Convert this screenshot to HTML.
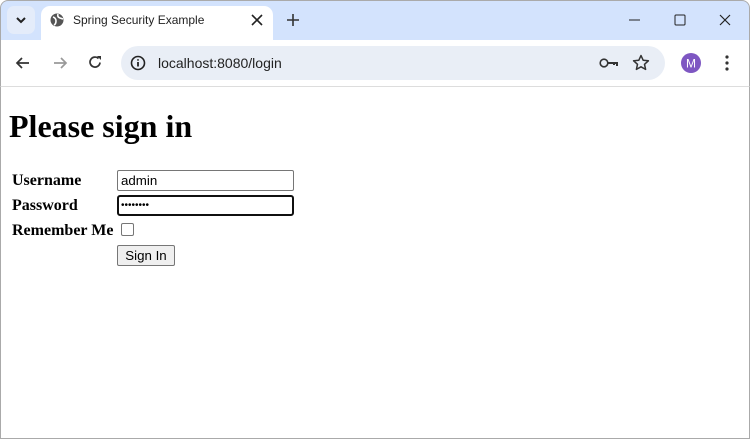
<!DOCTYPE html>
<html><head><meta charset="utf-8"><style>
*{margin:0;padding:0;box-sizing:border-box}
body{width:750px;height:439px;overflow:hidden;background:#fff;font-family:"Liberation Sans",sans-serif;position:relative}
.top{position:absolute;left:0;top:0;width:750px;height:40px;background:#d3e3fd;border:1px solid #aaa;border-bottom:none;border-radius:8px 8px 0 0}
.tab{position:absolute;left:41px;top:6px;width:232px;height:36px;background:#fff;border-radius:9px 9px 0 0}
.tabtxt{position:absolute;left:73px;top:13px;font-size:12px;color:#222}
.dd{position:absolute;left:7px;top:6px;width:28px;height:28px;background:#e4ecfa;border-radius:7px}
.bar{position:absolute;left:0;top:40px;width:750px;height:47px;background:#fff;border-left:1px solid #aaa;border-right:1px solid #aaa;border-bottom:1px solid #ddd}
.omni{position:absolute;left:121px;top:46px;width:544px;height:34px;background:#e9eef6;border-radius:17px}
.url{position:absolute;left:158px;top:55px;font-size:14px;color:#222}
.page{position:absolute;left:0;top:87px;width:750px;height:352px;border:1px solid #aaa;border-top:none}
h1{position:absolute;left:9px;top:108px;font-family:"Liberation Serif",serif;font-size:32px;font-weight:bold}
.lbl{position:absolute;left:12px;font-family:"Liberation Serif",serif;font-weight:bold;font-size:16px}
.in{position:absolute;left:117px;width:177px;height:21px;border:1px solid #767676;border-radius:2px;font-size:13.3px;padding:2px 3px;line-height:15px}
svg{position:absolute}
</style></head><body>
<div class="top"></div>
<div class="dd"></div>
<svg style="left:14px;top:14px" width="14" height="12"><path d="M3 4l4 4 4-4" stroke="#222" stroke-width="2" fill="none"/></svg>
<div class="tab"></div>
<svg style="left:50px;top:13px" width="14" height="14"><circle cx="7" cy="7" r="6.5" fill="#555"/><path d="M3 4q3 1 3 4t-2 4M8 1q-1 3 2 4t3 1" stroke="#fff" stroke-width="1.6" fill="none"/></svg>
<div class="tabtxt">Spring Security Example</div>
<svg style="left:251px;top:14px" width="12" height="12"><path d="M1 1l10 10M11 1L1 11" stroke="#222" stroke-width="1.6"/></svg>
<svg style="left:286px;top:13px" width="14" height="14"><path d="M7 1v12M1 7h12" stroke="#333" stroke-width="1.6"/></svg>
<svg style="left:629px;top:19px" width="12" height="2"><path d="M0 1h11" stroke="#222"/></svg>
<svg style="left:674px;top:14px" width="12" height="12"><rect x="1" y="1" width="10" height="10" rx="1" stroke="#222" fill="none"/></svg>
<svg style="left:719px;top:14px" width="12" height="12"><path d="M1 1l10 10M11 1L1 11" stroke="#222" stroke-width="1.2"/></svg>
<div class="bar"></div>
<svg style="left:15px;top:56px" width="16" height="14"><path d="M14 7H2M7 2L2 7l5 5" stroke="#333" stroke-width="1.7" fill="none"/></svg>
<svg style="left:52px;top:56px" width="16" height="14"><path d="M2 7h12M9 2l5 5-5 5" stroke="#999" stroke-width="1.7" fill="none"/></svg>
<svg style="left:88px;top:55px" width="15" height="15"><path d="M12 7.5A5 5 0 1 1 10.5 3.5" stroke="#333" stroke-width="1.7" fill="none"/><path d="M9 1h4v4z" fill="#333"/></svg>
<div class="omni"></div>
<svg style="left:130px;top:55px" width="16" height="16"><circle cx="8" cy="8" r="6.5" stroke="#222" stroke-width="1.6" fill="none"/><path d="M8 7v4.5M8 4.2v1.4" stroke="#222" stroke-width="1.8"/></svg>
<div class="url">localhost:8080/login</div>
<svg style="left:599px;top:56px" width="20" height="14"><circle cx="5" cy="7" r="3.8" stroke="#333" stroke-width="1.6" fill="none"/><path d="M9 7h9v3M15 7v2" stroke="#333" stroke-width="2" fill="none"/></svg>
<svg style="left:632px;top:54px" width="18" height="17"><path d="M9 1.5l2.2 4.8 5.2.5-3.9 3.5 1.1 5.1L9 12.8l-4.6 2.6 1.1-5.1L1.6 6.8l5.2-.5z" stroke="#333" stroke-width="1.5" fill="none" stroke-linejoin="round"/></svg>
<svg style="left:681px;top:53px" width="20" height="20"><circle cx="10" cy="10" r="10" fill="#7e57c2"/><text x="10" y="14.5" font-size="12" fill="#fff" text-anchor="middle" font-family="Liberation Sans">M</text></svg>
<svg style="left:724px;top:55px" width="6" height="16"><circle cx="3" cy="2" r="1.6" fill="#333"/><circle cx="3" cy="8" r="1.6" fill="#333"/><circle cx="3" cy="14" r="1.6" fill="#333"/></svg>
<div class="page"></div>
<h1>Please sign in</h1>
<div class="lbl" style="top:172px">Username</div>
<div class="lbl" style="top:197px">Password</div>
<div class="lbl" style="top:222px">Remember Me</div>
<div class="in" style="top:170px">admin</div>
<div class="in" style="top:195px;border:2px solid #101010;border-radius:3px;font-size:10px;padding:1px 2px">••••••••</div>
<div style="position:absolute;left:121px;top:223px;width:13px;height:13px;border:1px solid #767676;border-radius:2px"></div>
<div style="position:absolute;left:117px;top:245px;width:58px;height:21px;background:#efefef;border:1px solid #767676;border-radius:2px;font-size:13.3px;text-align:center;line-height:19px">Sign In</div>
</body></html>
